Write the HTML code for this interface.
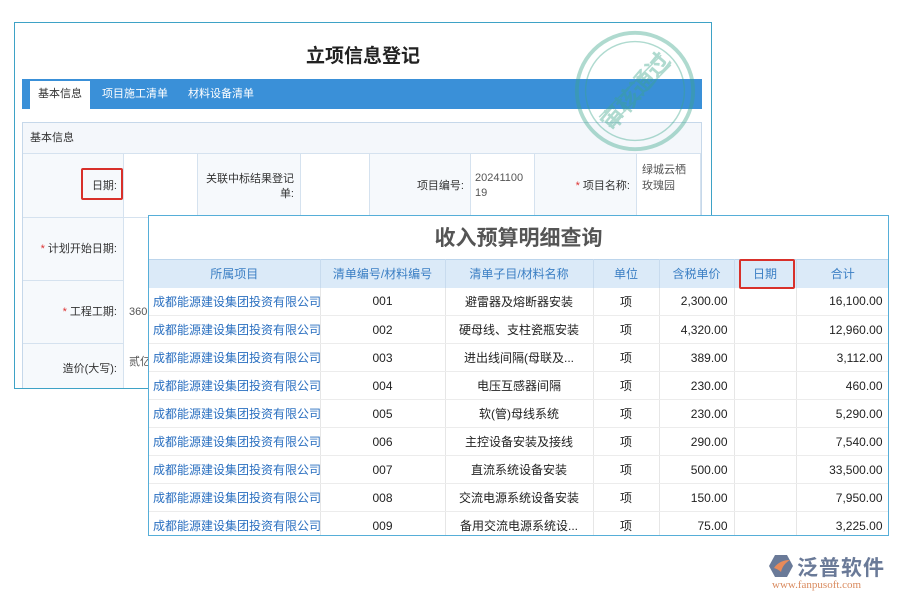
<!DOCTYPE html>
<html><head><meta charset="utf-8"><style>
*{margin:0;padding:0;box-sizing:border-box}
body{width:900px;height:600px;background:#fff;position:relative;overflow:hidden;font-family:"Liberation Sans","Noto Sans CJK SC",sans-serif;font-size:11px;color:#333}
.a{position:absolute}
#back{left:14px;top:22px;width:698px;height:367px;border:1px solid #3ea2c6;background:#fff;overflow:hidden}
.t1{left:0;width:100%;top:18px;text-align:center;font-size:19px;font-weight:bold;color:#222}
.bar{left:7px;top:56px;width:680px;height:30px;background:#3a90d8}
.tab{top:2px;height:28px;line-height:27px;color:#fff;font-size:11px}
.sec{left:7px;top:99px;width:680px;height:270px;border:1px solid #c6d8ea;border-bottom:none}
.cell{border-right:1px solid #d5e2ef;border-bottom:1px solid #d5e2ef}
.lbl{background:#f6f9fc;text-align:right;padding-right:6px}
#front{left:148px;top:215px;width:741px;height:321px;border:1px solid #56aed8;background:#fff;overflow:hidden}
.t2{left:0;width:100%;top:6px;text-align:center;font-size:21px;font-weight:bold;color:#555}
table{position:absolute;left:0;top:43px;border-collapse:collapse;width:740px;table-layout:fixed}
th{height:28px;background:#dbeaf8;color:#3b7fc4;font-weight:normal;font-size:12px;border-right:1px solid #c8dbee;border-top:1px solid #bcd5ec}
td{height:28px;font-size:12px;border-right:1px solid #e6e6e6;border-bottom:1px solid #ececec;text-align:center;white-space:nowrap;overflow:hidden;color:#222}
td.p{color:#2a6fc0;text-align:left;padding-left:4px;text-overflow:clip}
td.r{text-align:right;padding-right:6px}
.red{border:2px solid #d8302a;border-radius:2px}
</style></head><body>
<div id="back" class="a">
 <div class="a t1">立项信息登记</div>
 <div class="a bar">
  <div class="a tab" style="left:8px;width:60px;background:#fff;color:#333;text-align:center">基本信息</div>
  <div class="a tab" style="left:80px">项目施工清单</div>
  <div class="a tab" style="left:166px">材料设备清单</div>
 </div>
 <div class="a sec">
  <div class="a" style="left:0;top:0;width:678px;height:31px;background:#f4f7fb;border-bottom:1px solid #d5e2ef;line-height:30px;padding-left:7px">基本信息</div>
  <div class="a cell lbl" style="left:0;top:31px;width:101px;height:64px;line-height:64px">日期:</div>
  <div class="a cell" style="left:101px;top:31px;width:74px;height:64px"></div>
  <div class="a cell lbl" style="left:175px;top:31px;width:103px;height:64px;padding-top:18px;line-height:15px">关联中标结果登记单:</div>
  <div class="a cell" style="left:278px;top:31px;width:69px;height:64px"></div>
  <div class="a cell lbl" style="left:347px;top:31px;width:101px;height:64px;line-height:64px">项目编号:</div>
  <div class="a cell" style="left:448px;top:31px;width:64px;height:64px;padding:17px 0 0 4px;line-height:15px;color:#555">20241100<br>19</div>
  <div class="a cell lbl" style="left:512px;top:31px;width:102px;height:64px;line-height:64px"><span style="color:#d33">*</span> 项目名称:</div>
  <div class="a cell" style="left:614px;top:31px;width:64px;height:64px;padding:8px 0 0 5px;line-height:16px;color:#555">绿城云栖<br>玫瑰园</div>
  <div class="a cell lbl" style="left:0;top:95px;width:101px;height:63px;line-height:63px"><span style="color:#d33">*</span> 计划开始日期:</div>
  <div class="a cell lbl" style="left:0;top:158px;width:101px;height:63px;line-height:63px"><span style="color:#d33">*</span> 工程工期:</div>
  <div class="a" style="left:106px;top:183px;color:#555">360</div>
  <div class="a cell lbl" style="left:0;top:221px;width:101px;height:50px;line-height:50px">造价(大写):</div>
  <div class="a" style="left:106px;top:230px;color:#555">贰亿</div>
 </div>
 <div class="a red" style="left:66px;top:145px;width:42px;height:32px"></div>
 <svg class="a" style="left:557px;top:5px;opacity:.4" width="126" height="126" viewBox="0 0 130 130">
  <g fill="none" stroke="#3aa58a"><circle cx="65" cy="65" r="60" stroke-width="4"/><circle cx="65" cy="65" r="51" stroke-width="1.5"/></g>
  <g transform="rotate(-50 65 65)" fill="#3aa58a"><text x="65" y="74" text-anchor="middle" font-size="24" font-weight="bold" font-family="Noto Sans CJK SC">审核通过</text></g>
  <line x1="28" y1="92" x2="92" y2="28" stroke="#3aa58a" stroke-width="1.5"/><line x1="38" y1="102" x2="102" y2="38" stroke="#3aa58a" stroke-width="1.5"/>
 </svg>
</div>
<div id="front" class="a">
 <div class="a t2">收入预算明细查询</div>
 <table>
  <colgroup><col style="width:171px"><col style="width:125px"><col style="width:148px"><col style="width:66px"><col style="width:75px"><col style="width:62px"><col style="width:93px"></colgroup>
  <tr><th>所属项目</th><th>清单编号/材料编号</th><th>清单子目/材料名称</th><th>单位</th><th>含税单价</th><th>日期</th><th style="border-right:none">合计</th></tr>
  <tr><td class="p">成都能源建设集团投资有限公司</td><td>001</td><td>避雷器及熔断器安装</td><td>项</td><td class="r">2,300.00</td><td></td><td class="r">16,100.00</td></tr>
  <tr><td class="p">成都能源建设集团投资有限公司</td><td>002</td><td>硬母线、支柱瓷瓶安装</td><td>项</td><td class="r">4,320.00</td><td></td><td class="r">12,960.00</td></tr>
  <tr><td class="p">成都能源建设集团投资有限公司</td><td>003</td><td>进出线间隔(母联及...</td><td>项</td><td class="r">389.00</td><td></td><td class="r">3,112.00</td></tr>
  <tr><td class="p">成都能源建设集团投资有限公司</td><td>004</td><td>电压互感器间隔</td><td>项</td><td class="r">230.00</td><td></td><td class="r">460.00</td></tr>
  <tr><td class="p">成都能源建设集团投资有限公司</td><td>005</td><td>软(管)母线系统</td><td>项</td><td class="r">230.00</td><td></td><td class="r">5,290.00</td></tr>
  <tr><td class="p">成都能源建设集团投资有限公司</td><td>006</td><td>主控设备安装及接线</td><td>项</td><td class="r">290.00</td><td></td><td class="r">7,540.00</td></tr>
  <tr><td class="p">成都能源建设集团投资有限公司</td><td>007</td><td>直流系统设备安装</td><td>项</td><td class="r">500.00</td><td></td><td class="r">33,500.00</td></tr>
  <tr><td class="p">成都能源建设集团投资有限公司</td><td>008</td><td>交流电源系统设备安装</td><td>项</td><td class="r">150.00</td><td></td><td class="r">7,950.00</td></tr>
  <tr><td class="p">成都能源建设集团投资有限公司</td><td>009</td><td>备用交流电源系统设...</td><td>项</td><td class="r">75.00</td><td></td><td class="r">3,225.00</td></tr>
 </table>
 <div class="a red" style="left:590px;top:43px;width:56px;height:30px"></div>
</div>
<svg class="a" style="left:768px;top:554px" width="26" height="24" viewBox="0 0 26 24"><path d="M7 1h12l6 11-6 11H7L1 12z" fill="#6a7a98"/><path d="M6 14c4-6 10-8 16-8-5 3-8 7-9 12-2-2-4-3-7-4z" fill="#e88a5a"/></svg>
<div class="a" style="left:797px;top:552px;font-size:21px;color:#6a7a98;font-weight:bold;letter-spacing:1px">泛普软件</div>
<div class="a" style="left:772px;top:579px;font-size:11px;color:#d98a5e;font-family:'Liberation Serif',serif">www.fanpusoft.com</div>
</body></html>
